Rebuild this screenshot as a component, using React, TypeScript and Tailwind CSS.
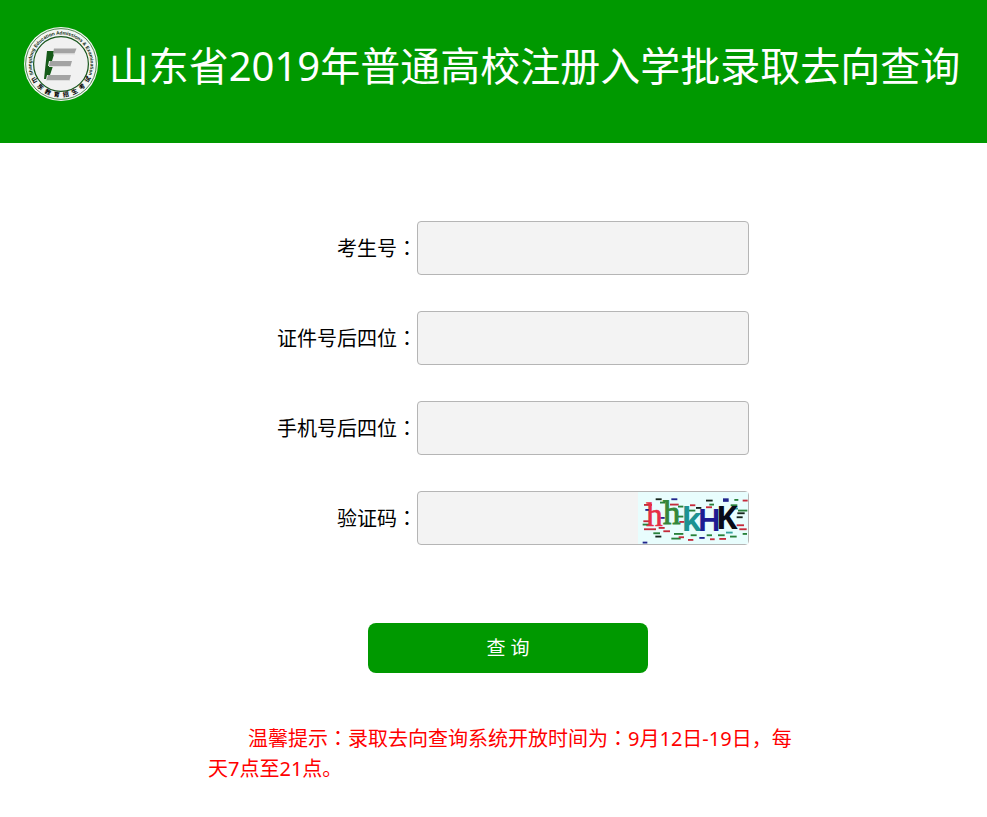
import React from "react";

const uiFont = "font-['Noto_Sans','Noto_Sans_CJK_SC',sans-serif]";

function Colon() {
  return <span className="font-['Noto_Sans_CJK_TC',sans-serif]" lang="zh-TW">：</span>;
}

const sealChars = "山东教育招生考试".split("");

function Logo() {
  return (
    <svg viewBox="0 0 76 76" className="size-[76px] shrink-0" role="img" aria-label="山东教育招生考试">
      <defs>
        <path id="ring-top" d="M12.4 52.7 A29.5 29.5 0 1 1 63.6 52.7" />
      </defs>
      <circle cx="38" cy="38" r="37" fill="#f3f5f3" />
      <circle cx="38" cy="38" r="35.4" fill="none" stroke="#3f7d3f" strokeWidth="0.9" />
      <circle cx="38" cy="38" r="27.4" fill="#f1f1f1" stroke="#17551b" strokeWidth="1.2" />
      <text fontSize="4.8" fontWeight="700" fill="#0c2a0e" fontFamily="Liberation Sans, sans-serif">
        <textPath href="#ring-top" startOffset="50%" textAnchor="middle">
          Shangdong Education Admissions &amp; Examination
        </textPath>
      </text>
      <g fontSize="6" fontWeight="900" fill="#111" textAnchor="middle" fontFamily="Noto Sans CJK SC, sans-serif">
        {sealChars.map((ch, i) => (
          <text key={ch} x="38" y="71" transform={`rotate(${59 - i * 17} 38 38)`}>
            {ch}
          </text>
        ))}
      </g>
      <path d="M24 25h8l-3 10h-3l-1 5h5l-3 9h-3l-1 4h-2z" fill="#155a18" />
      <path d="M31 22.500h22.500l-2 5H30z" fill="#a3a3a3" />
      <path d="M27 35h22l-1.500 5H26z" fill="#a3a3a3" />
      <path d="M25 49h23l-1.500 5H23.500z" fill="#a3a3a3" />
      <path d="M30 28h22M26 40.500h22M23 54.500h24" stroke="#dedede" strokeWidth="1" />
    </svg>
  );
}

const red = "#c52b3b";
const green = "#27803a";
const navy = "#20258c";
const black = "#15251c";
const teal = "#35a29d";

const specks: [number, number, number, string][] = [
  [75, 40, 18, black], [40, 57, 24, red], [88, 50, 16, green], [122, 40, 18, navy],
  [118, 56, 26, red], [142, 62, 16, green], [178, 58, 16, red], [174, 74, 20, green],
  [196, 66, 16, black], [226, 44, 20, black], [226, 64, 18, red], [236, 56, 14, green],
  [277, 40, 17, navy], [277, 45, 17, navy], [300, 58, 20, green], [304, 68, 18, teal],
  [311, 42, 12, green], [336, 44, 15, red], [322, 74, 28, green], [320, 82, 22, black],
  [318, 94, 18, black], [44, 72, 12, navy], [38, 106, 20, red], [36, 116, 22, green],
  [40, 130, 36, red], [88, 96, 14, navy], [84, 126, 18, red], [142, 92, 16, green],
  [146, 108, 16, red], [68, 142, 20, green], [74, 152, 18, black], [98, 136, 20, red],
  [130, 144, 28, green], [122, 158, 28, green], [144, 154, 16, red], [36, 170, 14, navy],
  [172, 162, 16, red], [180, 148, 18, green], [206, 156, 16, navy], [238, 160, 14, red],
  [228, 148, 16, green], [262, 148, 20, green], [266, 159, 20, red], [286, 140, 20, teal],
  [298, 152, 20, green], [326, 130, 22, red], [336, 144, 13, green], [318, 118, 22, red],
];

function Captcha() {
  return (
    <svg viewBox="22 21 330 156" className="h-[52px] w-[110px]" role="img" aria-label="验证码图片">
      <rect x="22" y="21" width="330" height="156" fill="#e8fdfd" />
      {specks.map(([x, y, w, color], i) => (
        <rect key={i} x={x} y={y} width={w} height="5.5" fill={color} />
      ))}
      <g fontFamily="Liberation Sans, sans-serif" fontWeight="700">
        <text x="47" y="122" fontSize="98" fill="#e62f45" fontFamily="Liberation Serif, serif" fontWeight="400" stroke="#e62f45" strokeWidth="2">h</text>
        <text x="97" y="118" fontSize="104" fill="#34873a" fontFamily="Liberation Serif, serif" fontWeight="400" stroke="#34873a" strokeWidth="3">h</text>
        <text x="153" y="138" fontSize="96" fill="#1c9292" fontFamily="Noto Sans, sans-serif">k</text>
        <text x="203" y="139" fontSize="92" fill="#1d1c92">H</text>
        <text x="256" y="133" fontSize="98" fill="#080b18" fontFamily="Noto Sans, sans-serif">K</text>
      </g>
    </svg>
  );
}

function Field({ id, label, children }: { id: string; label: string; children?: React.ReactNode }) {
  return (
    <div className="grid grid-cols-[209px_332px] items-center">
      <label htmlFor={id} className="text-right text-xl leading-[30px] whitespace-nowrap">
        {label}
        <Colon />
      </label>
      <div className="relative">
        <input
          id={id}
          type="text"
          className="block h-[54px] w-full rounded-sm border border-[#b5b5b5] bg-[#f3f3f3] px-3 text-xl outline-none"
        />
        {children}
      </div>
    </div>
  );
}

export default function App() {
  return (
    <div className={`min-h-screen bg-white text-black ${uiFont}`} lang="zh-CN">
      <header className="flex h-[143px] items-start justify-center gap-[10px] bg-[#009900] pt-[26px] pr-1">
        <Logo />
        <h1 className="text-[40px] leading-[80px] whitespace-nowrap text-white">
          山东省2019年普通高校注册入学批录取去向查询
        </h1>
      </header>
      <main className="pt-[78px] pl-[29px]">
        <form className="mx-auto w-full max-w-[600px]" onSubmit={(e) => e.preventDefault()}>
          <div className="flex flex-col gap-9">
            <Field id="ksh" label="考生号" />
            <Field id="zjh" label="证件号后四位" />
            <Field id="sjh" label="手机号后四位" />
            <Field id="yzm" label="验证码">
              <button type="button" aria-label="刷新验证码" className="absolute top-px right-px cursor-pointer">
                <Captcha />
              </button>
            </Field>
          </div>
          <button
            type="submit"
            className="mx-auto mt-[78px] block h-[50px] w-[280px] cursor-pointer rounded-lg bg-[#009900] text-[19px] text-white"
          >
            查 询
          </button>
          <p className="mt-[50px] indent-10 text-xl leading-[30px] text-[#ff0000]">
            温馨提示
            <Colon />
            录取去向查询系统开放时间为
            <Colon />
            9月12日-19日，每天7点至21点。
          </p>
        </form>
      </main>
    </div>
  );
}
